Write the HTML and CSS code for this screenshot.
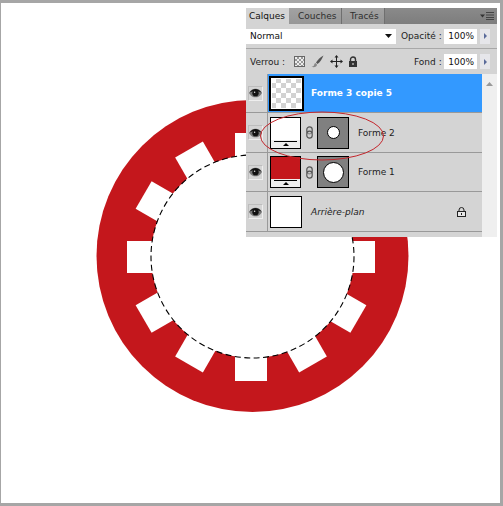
FILE: index.html
```html
<!DOCTYPE html>
<html lang="fr">
<head>
<meta charset="utf-8">
<title>Calques</title>
<link rel="stylesheet" href="styles.css">
</head>
<body>
<div class="window">
  <svg class="canvas" width="499" height="500" viewBox="1 3 499 500" aria-hidden="true">
    <circle cx="252.5" cy="256" r="156" fill="#c4171c"/>
    <g fill="#fff">
      <rect x="235" y="225" width="32" height="32" transform="rotate(0 251 257) translate(0 -92)"/>
      <rect x="235" y="225" width="32" height="32" transform="rotate(30 251 257) translate(0 -92)"/>
      <rect x="235" y="225" width="32" height="32" transform="rotate(60 251 257) translate(0 -92)"/>
      <rect x="235" y="225" width="32" height="32" transform="rotate(90 251 257) translate(0 -92)"/>
      <rect x="235" y="225" width="32" height="32" transform="rotate(120 251 257) translate(0 -92)"/>
      <rect x="235" y="225" width="32" height="32" transform="rotate(150 251 257) translate(0 -92)"/>
      <rect x="235" y="225" width="32" height="32" transform="rotate(180 251 257) translate(0 -92)"/>
      <rect x="235" y="225" width="32" height="32" transform="rotate(210 251 257) translate(0 -92)"/>
      <rect x="235" y="225" width="32" height="32" transform="rotate(240 251 257) translate(0 -92)"/>
      <rect x="235" y="225" width="32" height="32" transform="rotate(270 251 257) translate(0 -92)"/>
      <rect x="235" y="225" width="32" height="32" transform="rotate(300 251 257) translate(0 -92)"/>
      <rect x="235" y="225" width="32" height="32" transform="rotate(330 251 257) translate(0 -92)"/>
    </g>
    <circle cx="252.5" cy="256.5" r="101.5" fill="#fff" stroke="#000" stroke-width="1.100" stroke-dasharray="6 3.500"/>
  </svg>

  <section class="panel">
    <div class="tabs">
      <span class="tab tab-active">Calques</span>
      <span class="tab tab-couches">Couches</span>
      <span class="tab tab-traces">Tracés</span>
      <svg class="panel-menu" width="14" height="8" viewBox="0 0 14 8">
        <path d="M0 2.500h5L2.500 5.500z" fill="#333"/>
        <path d="M6 .5h8M6 3h8M6 5.500h8M6 7.500h8" stroke="#444" stroke-width="1"/>
      </svg>
    </div>

    <div class="options">
      <div class="blend">
        <span>Normal</span>
        <svg width="7" height="4" viewBox="0 0 7 4"><path d="M0 0h7L3.500 4z" fill="#111"/></svg>
      </div>
      <span class="opt-label">Opacité :</span>
      <span class="value">100%</span>
      <span class="stepper"><svg width="3" height="6" viewBox="0 0 3 6"><path d="M0 0l3 3-3 3z" fill="#5a6a9a"/></svg></span>
    </div>

    <div class="options options-lock">
      <span class="lock-label">Verrou :</span>
      <span class="lock-check"></span>
      <svg class="lock-brush" width="13" height="13" viewBox="0 0 13 13"><path d="M12.500.5C9 2.500 6.500 5 5 7.500L6.500 9C9 7.500 11 4 12.500.5z" fill="#555"/><path d="M4.500 8C3 8.500 3.500 10 2.500 11c-.5.500-1.500.800-2 .800C3 12.800 6 12 6 9.500z" fill="#888"/></svg>
      <svg class="lock-move" width="13" height="13" viewBox="0 0 13 13"><path d="M6.500 1v11M1 6.500h11" stroke="#222" stroke-width="1"/><path d="M6.500 0l2 2.500h-4zM6.500 13l2-2.500h-4zM0 6.500l2.500-2v4zM13 6.500l-2.500-2v4z" fill="#222"/></svg>
      <svg class="lock-all" width="10" height="11" viewBox="0 0 10 11"><path d="M2.500 5V3.500a2.500 2.500 0 0 1 5 0V5" fill="none" stroke="#333" stroke-width="1.400"/><rect x="1" y="5" width="8" height="6" fill="#333"/><rect x="4.300" y="7" width="1.400" height="2" fill="#bbb"/></svg>
      <span class="opt-label opt-fill">Fond :</span>
      <span class="value">100%</span>
      <span class="stepper"><svg width="3" height="6" viewBox="0 0 3 6"><path d="M0 0l3 3-3 3z" fill="#5a6a9a"/></svg></span>
    </div>

    <div class="list-area">
      <div class="layers">
        <div class="layer layer-selected">
          <span class="eye"><svg width="13" height="10" viewBox="0 0 12 9"><use href="#eye-glyph"/></svg></span>
          <span class="thumb thumb-checker"></span>
          <span class="name name-strong">Forme 3 copie 5</span>
        </div>
        <div class="layer layer-forme2">
          <span class="eye"><svg width="13" height="10" viewBox="0 0 12 9"><use href="#eye-glyph"/></svg></span>
          <span class="thumb thumb-fill"><span class="swatch swatch-white"></span><span class="fill-bar"></span></span>
          <svg class="chain" width="7" height="13" viewBox="0 0 7 13"><use href="#chain-glyph"/></svg>
          <span class="mask"><span class="hole hole-small"></span></span>
          <span class="name">Forme 2</span>
        </div>
        <div class="layer layer-forme1">
          <span class="eye"><svg width="13" height="10" viewBox="0 0 12 9"><use href="#eye-glyph"/></svg></span>
          <span class="thumb thumb-fill"><span class="swatch swatch-red"></span><span class="fill-bar"></span></span>
          <svg class="chain" width="7" height="13" viewBox="0 0 7 13"><use href="#chain-glyph"/></svg>
          <span class="mask"><span class="hole hole-large"></span></span>
          <span class="name">Forme 1</span>
        </div>
        <div class="layer layer-bg">
          <span class="eye"><svg width="13" height="10" viewBox="0 0 12 9"><use href="#eye-glyph"/></svg></span>
          <span class="thumb thumb-plain"></span>
          <span class="name name-italic">Arrière-plan</span>
          <svg class="bg-lock" width="9" height="10" viewBox="0 0 9 10"><path d="M2 4.500V3a2.500 2.500 0 0 1 5 0v1.500" fill="none" stroke="#222" stroke-width="1"/><rect x=".5" y="4.500" width="8" height="5" fill="#e8e8e8" stroke="#222"/><rect x="4" y="6" width="1" height="2" fill="#222"/></svg>
        </div>
        <div class="layers-foot"></div>
      </div>
      <div class="scroll">
        <svg width="7" height="4" viewBox="0 0 7 4"><path d="M3.500 0L7 4H0z" fill="#999"/></svg>
      </div>
    </div>
  </section>

  <svg class="callout" width="130" height="54" viewBox="0 0 130 54" aria-hidden="true">
    <ellipse cx="65" cy="27" rx="61.500" ry="24" fill="none" stroke="#c4262c" stroke-width="1"/>
  </svg>

  <svg class="defs" width="0" height="0" aria-hidden="true">
    <defs>
      <g id="eye-glyph">
        <path d="M0 4.500C2 1 4 .5 6 .5s4 .5 6 4c-2 3.500-4 4-6 4s-4-.5-6-4z" fill="#777"/>
        <path d="M.5 4C2.500 1.200 4.500.7 6 .7s3.500.5 5.500 3.300c-1.500-.6-3.500-1.300-5.500-1.300S2 3.400.5 4z" fill="#111"/>
        <circle cx="6" cy="4.700" r="2.900" fill="#111"/>
        <circle cx="5.200" cy="3.900" r=".7" fill="#ddd"/>
      </g>
      <g id="chain-glyph">
        <rect x=".8" y=".8" width="5.400" height="7" rx="2.700" fill="#ccc" stroke="#555" stroke-width="1.200"/>
        <rect x=".8" y="5.200" width="5.400" height="7" rx="2.700" fill="#ccc" fill-opacity=".5" stroke="#555" stroke-width="1.200"/>
      </g>
    </defs>
  </svg>
</div>
</body>
</html>
```

FILE: styles.css
```css
* { box-sizing: border-box; }

html, body {
  margin: 0;
  padding: 0;
  background: #fff;
}

.window {
  position: relative;
  width: 503px;
  height: 506px;
  overflow: hidden;
  background: #fff;
  border-style: solid;
  border-color: #a6a6a6;
  border-width: 3px 3px 3px 1px;
}

.canvas {
  display: block;
}

.defs {
  position: absolute;
}

.panel {
  position: absolute;
  left: 245px;
  top: 5px;
  width: 251px;
  height: 229px;
  display: flex;
  flex-direction: column;
  background: #d4d4d4;
  font-family: "DejaVu Sans", sans-serif;
  font-size: 9px;
  color: #1c1c1c;
}

.callout {
  position: absolute;
  left: 255.5px;
  top: 106px;
}

.tabs {
  height: 16px;
  display: flex;
  align-items: stretch;
  background: linear-gradient(#8a8a8a, #7d7d7d);
  flex: none;
}

.tab {
  display: flex;
  align-items: center;
  padding-left: 4px;
  background: linear-gradient(#a2a2a2, #969696);
  border-right: 1px solid #6f6f6f;
  color: #2e2e2e;
}

.tab-active {
  width: 43px;
  padding-left: 3px;
  background: #d4d4d4;
  color: #111;
  border-right: 0;
}

.tab-couches { width: 53px; padding-left: 9px; }
.tab-traces { width: 43px; padding-left: 8px; }

.panel-menu {
  margin: 4px 3px 0 auto;
}

.options {
  height: 25px;
  flex: none;
  display: flex;
  align-items: center;
  border-bottom: 1px solid #a8a8a8;
}

.blend {
  width: 150px;
  height: 15px;
  background: #fff;
  display: flex;
  align-items: center;
  justify-content: space-between;
  padding: 0 4px 0 4px;
  color: #111;
}

.opt-label {
  margin-left: 5px;
  width: 43px;
}

.value {
  width: 33px;
  height: 15px;
  background: #fff;
  display: flex;
  align-items: center;
  justify-content: flex-end;
  padding-right: 3px;
  color: #111;
}

.stepper {
  width: 10px;
  height: 15px;
  margin-left: 3px;
  background: #e6e6ea;
  display: flex;
  align-items: center;
  justify-content: center;
}

.lock-label {
  margin-left: 4px;
  width: 44px;
}

.lock-check {
  width: 11px;
  height: 11px;
  border: 1px solid #666;
  background: repeating-conic-gradient(#999 0 25%, #eee 0 50%) 0 0 / 4px 4px;
}

.lock-brush { margin-left: 6px; }
.lock-move { margin-left: 6px; }
.lock-all { margin-left: 5px; }

.opt-fill {
  margin-left: auto;
  width: 30px;
}

.options-lock {
  height: 25px;
  border-bottom: 0;
  padding-right: 7px;
}

.options > .stepper:last-child {
  margin-right: 7px;
}

.options-lock > .stepper:last-child {
  margin-right: 0;
}

.list-area {
  flex: 1;
  display: flex;
  min-height: 0;
}

.layers {
  width: 236px;
  display: flex;
  flex-direction: column;
}

.scroll {
  flex: 1;
  background: #efefef;
  display: flex;
  justify-content: center;
  align-items: flex-start;
  padding-top: 8px;
}

.layer {
  position: relative;
  display: flex;
  align-items: center;
  border-bottom: 1px solid #999;
  flex: none;
  background: linear-gradient(90deg, transparent 21px, #999 21px, #999 22px, transparent 22px);
}

.layer-selected {
  height: 39px;
  background: linear-gradient(90deg, #d4d4d4 21px, #999 21px, #999 22px, #3399ff 22px);
}

.layer-forme2 { height: 40px; }
.layer-forme1 { height: 39px; }
.layer-bg { height: 40px; }

.layers-foot {
  flex: 1;
  border-top: 1px solid #999;
  margin-top: -1px;
}

.eye {
  width: 15px;
  height: 15px;
  margin-left: 2px;
  display: flex;
  align-items: center;
  justify-content: center;
  border: 1px solid #bdbdbd;
  border-right-color: #eee;
  border-bottom-color: #eee;
  flex: none;
}

.thumb {
  flex: none;
  display: flex;
  flex-direction: column;
}

.thumb-checker {
  width: 35px;
  height: 35px;
  margin-left: 6px;
  border: 2px solid #000;
  outline: 1px solid #fff;
  outline-offset: -3px;
  background: repeating-conic-gradient(#d2d2d2 0 25%, #fff 0 50%) 0 0 / 10px 10px;
}

.thumb-fill {
  width: 31px;
  height: 32px;
  margin-left: 7px;
  border: 1px solid #000;
  background: #eee;
}

.swatch {
  height: 22px;
}

.swatch-white { background: #fff; }
.swatch-red { background: #c4171c; }

.fill-bar {
  position: relative;
  margin: 1px 3px 0;
  height: 6px;
  border-top: 1px solid #000;
}

.fill-bar::after {
  content: "";
  position: absolute;
  left: 9px;
  top: 1px;
  width: 0;
  height: 0;
  border: 3px solid transparent;
  border-top-width: 0;
  border-bottom: 3px solid #000;
}

.thumb-plain {
  width: 32px;
  height: 32px;
  margin-left: 7px;
  background: #fff;
  border: 1px solid #000;
}

.chain {
  margin-left: 5px;
  flex: none;
}

.mask {
  width: 32px;
  height: 32px;
  margin-left: 4px;
  background: #808080;
  border: 1px solid #000;
  display: flex;
  align-items: center;
  justify-content: center;
  flex: none;
}

.hole {
  display: block;
  border-radius: 50%;
  background: #fff;
  border: 1px solid #000;
}

.hole-small { width: 13px; height: 13px; }
.hole-large { width: 21px; height: 21px; }

.name {
  margin-left: 9px;
}

.name-strong {
  margin-left: 7px;
  color: #fff;
  font-weight: bold;
}

.name-italic {
  margin-left: 9px;
  font-style: italic;
}

.bg-lock {
  margin-left: auto;
  margin-right: 16px;
}
```
